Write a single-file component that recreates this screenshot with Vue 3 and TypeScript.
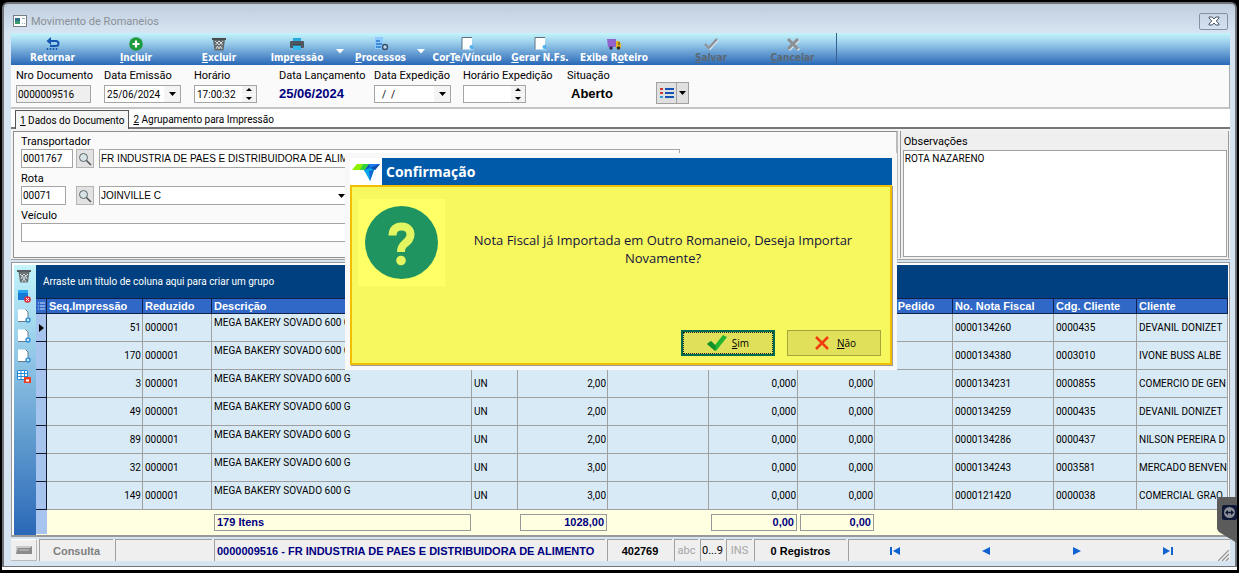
<script setup lang="ts">
import { ref } from 'vue'

interface ToolAction {
  id: string
  label: [string, string, string]
  icon: string
  disabled?: boolean
  menu?: boolean
}

interface Item {
  seq: string
  reduzido: string
  descricao: string
  unidade: string
  quantidade: string
  peso: string
  volume: string
  nota: string
  cdgCliente: string
  cliente: string
}

const actions: ToolAction[] = [
  { id: 'retornar', label: ['Retornar', '', ''], icon: 'back' },
  { id: 'incluir', label: ['', 'I', 'ncluir'], icon: 'add' },
  { id: 'excluir', label: ['', 'E', 'xcluir'], icon: 'trash' },
  { id: 'impressao', label: ['Imp', 'r', 'essão'], icon: 'printer', menu: true },
  { id: 'processos', label: ['', 'P', 'rocessos'], icon: 'process', menu: true },
  { id: 'corte', label: ['Cor', 'T', 'e/Vínculo'], icon: 'page' },
  { id: 'gerar', label: ['', 'G', 'erar N.Fs.'], icon: 'page' },
  { id: 'roteiro', label: ['Exibe R', 'o', 'teiro'], icon: 'truck' },
  { id: 'salvar', label: ['', 'S', 'alvar'], icon: 'check', disabled: true },
  { id: 'cancelar', label: ['', 'C', 'ancelar'], icon: 'cross', disabled: true },
]

const sideTools = [
  { name: 'Excluir item', icon: 'trash' },
  { name: 'Remover dados', icon: 'data' },
  { name: 'Nova folha', icon: 'page' },
  { name: 'Abrir folha', icon: 'page' },
  { name: 'Copiar folha', icon: 'page' },
  { name: 'Exportar grade', icon: 'grid' },
]

const mk = (seq: string, quantidade: string, nota: string, cdgCliente: string, cliente: string): Item => ({
  seq,
  reduzido: '000001',
  descricao: 'MEGA BAKERY SOVADO 600 G',
  unidade: 'UN',
  quantidade,
  peso: '0,000',
  volume: '0,000',
  nota,
  cdgCliente,
  cliente,
})

const items: Item[] = [
  mk('51', '2,00', '0000134260', '0000435', 'DEVANIL DONIZET'),
  mk('170', '2,00', '0000134380', '0003010', 'IVONE BUSS ALBE'),
  mk('3', '2,00', '0000134231', '0000855', 'COMERCIO DE GEN'),
  mk('49', '2,00', '0000134259', '0000435', 'DEVANIL DONIZET'),
  mk('89', '2,00', '0000134286', '0000437', 'NILSON PEREIRA D'),
  mk('32', '3,00', '0000134243', '0003581', 'MERCADO BENVEN'),
  mk('149', '3,00', '0000121420', '0000038', 'COMERCIAL GRAO'),
]

const documento = ref('0000009516')
const emissao = ref('25/06/2024')
const horario = ref('17:00:32')
const expedicao = ref('  /  /')
const horarioExp = ref('')
const codTransportador = ref('0001767')
const codRota = ref('00071')
const veiculo = ref('')
const observacoes = ref('ROTA NAZARENO')
const dialogOpen = ref(true)
</script>

<template>
  <div class="desktop">
    <main class="window">
      <header class="titlebar">
        <svg class="app-icon" viewBox="0 0 14 12" aria-hidden="true">
          <rect x=".5" y=".5" width="13" height="11" fill="#fff" stroke="#777e86" />
          <rect x="2" y="3" width="5" height="6" fill="#2b6f8c" />
          <rect x="2" y="6" width="5" height="3" fill="#3a9a6c" />
          <path d="M9 3.500h3M9 8.500h1M11 8.500h1" stroke="#9aa" />
        </svg>
        <h1>Movimento de Romaneios</h1>
        <button class="close" type="button" aria-label="Fechar">
          <svg viewBox="0 0 12 10"><path d="M1 1h3.200L6 3 7.800 1H11v1L8.300 5 11 8v1H7.800L6 7 4.200 9H1V8l2.700-3L1 2z" fill="#fff" stroke="#4a5363" /></svg>
        </button>
      </header>

      <nav class="toolbar" aria-label="Ações">
        <template v-for="a in actions" :key="a.id">
          <button type="button" class="tool" :class="a.id" :disabled="a.disabled">
            <svg class="tool-icon" viewBox="0 0 16 14" aria-hidden="true">
              <g v-if="a.icon === 'back'" fill="none" stroke="#1557b0">
                <path d="M4 4h7a2.500 2.500 0 0 1 0 5H5" stroke-width="2" />
                <path d="M6 0 1.500 4 6 8z" fill="#1557b0" stroke="none" />
                <path d="M2.500 11v2M5.500 11v2M8.500 11v2M11.500 11v2" stroke-width="1.500" />
              </g>
              <g v-else-if="a.icon === 'add'">
                <circle cx="8" cy="7" r="6.800" fill="#1c9a3c" />
                <path d="M8 3.500v7M4.500 7h7" stroke="#fff" stroke-width="2.200" />
              </g>
              <g v-else-if="a.icon === 'trash'">
                <path d="M2 2h12l-1.500 11.500h-9z" fill="#64686b" />
                <path d="M4 4l2 2 2-2 2 2 2-2M4.500 8l2-2 1.500 2 2-2 1.500 2M5 12l1.500-3L8 12l1.500-3 1.500 3" fill="none" stroke="#e3eef2" stroke-width=".9" />
                <path d="M1 2h14" stroke="#494d50" stroke-width="2" />
              </g>
              <g v-else-if="a.icon === 'printer'">
                <rect x="4" y="1" width="8" height="4" fill="#27a9dd" />
                <rect x="1" y="4" width="14" height="7" rx="1" fill="#50565d" />
                <rect x="4" y="8" width="8" height="5" fill="#35b8e8" />
                <path d="M4 8h8" stroke="#2f3439" />
              </g>
              <g v-else-if="a.icon === 'process'">
                <path d="M2 0h8v12H2z" fill="#8ccaff" />
                <path d="M3 4h4M3 7h6M3 10h5" stroke="#2878d0" stroke-width="1.500" />
                <circle cx="12" cy="10" r="2.500" fill="#b8d6ee" stroke="#385170" stroke-width="1.500" />
              </g>
              <g v-else-if="a.icon === 'page'">
                <path d="M3 .5h10v12H3z" fill="#fff" />
                <path d="M13 .5H3v12" fill="none" stroke="#5f7180" />
                <circle cx="12.500" cy="10" r="2" fill="#4fb2ee" />
                <path d="M9 13h6" stroke="#8bd2f8" />
              </g>
              <g v-else-if="a.icon === 'truck'">
                <path d="M1 2h9v8H2z" fill="#9063cf" />
                <path d="M10 4h3l2 3v4h-5z" fill="#e6b51f" />
                <circle cx="5" cy="11" r="1.800" fill="#382b58" /><circle cx="12.500" cy="11" r="1.800" fill="#34332e" />
                <path d="M13 5v3" stroke="#38321a" />
              </g>
              <g v-else-if="a.icon === 'check'" fill="none">
                <path d="m3 7.800 4 4 8-9" stroke="#dce7ef" stroke-width="2" />
                <path d="m2 7 4 4 8-9" stroke="#8b9094" stroke-width="2.200" />
              </g>
              <g v-else fill="none">
                <path d="m4 3 10 10M14 3 4 13" stroke="#dce7ef" stroke-width="2.500" />
                <path d="m3 2 10 10M13 2 3 12" stroke="#8b9094" stroke-width="3" />
              </g>
            </svg>
            <span>{{ a.label[0] }}<u>{{ a.label[1] }}</u>{{ a.label[2] }}</span>
          </button>
          <button v-if="a.menu" class="drop" type="button" :aria-label="'Opções de ' + a.label.join('')">
            <svg viewBox="0 0 8 5"><path d="M0 0h8L4 4.500z" fill="#fff" /></svg>
          </button>
        </template>
        <span class="tool-end"></span>
      </nav>

      <section class="filters">
        <div class="field">
          <label for="doc">Nro Documento</label>
          <input id="doc" v-model="documento" class="box w-doc" readonly />
        </div>
        <div class="field">
          <label for="emi">Data Emissão</label>
          <div class="box combo">
            <input id="emi" v-model="emissao" />
            <button type="button" aria-label="Abrir calendário de emissão"><svg viewBox="0 0 7 4"><path d="M0 0h7L3.500 4z" /></svg></button>
          </div>
        </div>
        <div class="field">
          <label for="hor">Horário</label>
          <div class="box spin">
            <input id="hor" v-model="horario" />
            <div class="arrows">
              <button type="button" aria-label="Aumentar horário"><svg viewBox="0 0 6 3"><path d="M0 3h6L3 0z" /></svg></button>
              <button type="button" aria-label="Diminuir horário"><svg viewBox="0 0 6 3"><path d="M0 0h6L3 3z" /></svg></button>
            </div>
          </div>
        </div>
        <div class="field">
          <span class="caption">Data Lançamento</span>
          <strong class="launch">25/06/2024</strong>
        </div>
        <div class="field">
          <label for="exp">Data Expedição</label>
          <div class="box combo">
            <input id="exp" v-model="expedicao" />
            <button type="button" aria-label="Abrir calendário de expedição"><svg viewBox="0 0 7 4"><path d="M0 0h7L3.500 4z" /></svg></button>
          </div>
        </div>
        <div class="field">
          <label for="hexp">Horário Expedição</label>
          <div class="box spin">
            <input id="hexp" v-model="horarioExp" />
            <div class="arrows">
              <button type="button" aria-label="Aumentar horário de expedição"><svg viewBox="0 0 6 3"><path d="M0 3h6L3 0z" /></svg></button>
              <button type="button" aria-label="Diminuir horário de expedição"><svg viewBox="0 0 6 3"><path d="M0 0h6L3 3z" /></svg></button>
            </div>
          </div>
        </div>
        <div class="field">
          <span class="caption">Situação</span>
          <strong class="status">Aberto</strong>
        </div>
        <div class="list-button">
          <button type="button" class="list-main" aria-label="Lista">
            <svg viewBox="0 0 14 10">
              <path d="M0 1h3M0 5h3" stroke="#c83a2e" stroke-width="2" /><path d="M0 9h3" stroke="#2f9fd8" stroke-width="2" />
              <path d="M5 1h9M5 5h9M5 9h9" stroke="#1553b5" stroke-width="2" />
            </svg>
          </button>
          <button type="button" class="list-drop" aria-label="Opções da lista"><svg viewBox="0 0 7 4"><path d="M0 0h7L3.500 4z" /></svg></button>
        </div>
      </section>

      <div class="tabs" role="tablist">
        <button type="button" role="tab" class="tab active" aria-selected="true"><u>1</u> Dados do Documento</button>
        <button type="button" role="tab" class="tab" aria-selected="false"><u>2</u> Agrupamento para Impressão</button>
      </div>

      <section class="details">
        <div class="carrier">
          <label for="transp">Transportador</label>
          <div class="row">
            <input id="transp" v-model="codTransportador" class="box w-code" />
            <span></span>
            <button type="button" class="search" aria-label="Pesquisar transportador">
              <svg viewBox="0 0 14 14"><circle cx="5.500" cy="5.500" r="4" fill="#d7e4e6" stroke="#5b6568" /><path d="m8.500 8.500 4.500 4.500" stroke="#4b5052" stroke-width="1.500" /></svg>
            </button>
            <div class="select-wrap">
              <select class="box" aria-label="Nome do transportador"><option>FR INDUSTRIA DE PAES E DISTRIBUIDORA DE ALIMENTOS</option></select>
              <svg viewBox="0 0 7 4"><path d="M0 0h7L3.500 4z" /></svg>
            </div>
          </div>
          <label for="rota">Rota</label>
          <div class="row">
            <input id="rota" v-model="codRota" class="box w-route" />
            <span></span>
            <button type="button" class="search" aria-label="Pesquisar rota">
              <svg viewBox="0 0 14 14"><circle cx="5.500" cy="5.500" r="4" fill="#d7e4e6" stroke="#5b6568" /><path d="m8.500 8.500 4.500 4.500" stroke="#4b5052" stroke-width="1.500" /></svg>
            </button>
            <div class="select-wrap route">
              <select class="box" aria-label="Nome da rota"><option>JOINVILLE C</option></select>
              <svg viewBox="0 0 7 4"><path d="M0 0h7L3.500 4z" /></svg>
            </div>
          </div>
          <label for="veic">Veículo</label>
          <input id="veic" v-model="veiculo" class="box w-vehicle" />
        </div>
        <div class="notes">
          <label for="obs">Observações</label>
          <textarea id="obs" v-model="observacoes"></textarea>
        </div>
      </section>

      <section class="grid-area">
        <div class="side">
          <button v-for="s in sideTools" :key="s.name" type="button" :aria-label="s.name">
            <svg viewBox="0 0 14 14">
              <g v-if="s.icon === 'trash'">
                <path d="M1.500 3h11l-1.500 10.500H3z" fill="#6d7375" />
                <path d="m3 5 2 2 2-2 2 2 2-2M4 10l1.500-3L7 10l1.500-3L10 10M5 13l2-3 2 3" fill="none" stroke="#dfeaee" stroke-width=".9" />
                <path d="M0 2h14" stroke="#54595b" stroke-width="2" />
              </g>
              <g v-else-if="s.icon === 'data'">
                <path d="M1 2h10v9H1z" fill="#167bd8" /><path d="M1 1h10v3H1z" fill="#2ba5f0" />
                <circle cx="10.500" cy="10.500" r="3.300" fill="#dc2f3d" /><path d="m9 9 3 3M12 9l-3 3" stroke="#fff" />
              </g>
              <g v-else-if="s.icon === 'page'">
                <path d="M1 .5h8l2 2v10H1z" fill="#fff" /><path d="M1 12.500h8M11 3v5" stroke="#6b7c88" /><path d="M8.500.5 11 3" stroke="#6b7c88" />
                <circle cx="11" cy="11" r="2" fill="#cfeaff" stroke="#2b8ad2" stroke-width="1.300" />
              </g>
              <g v-else>
                <path d="M0 1h11v10H0z" fill="#fff" /><path d="M.5 1.500h10v9H.5zM4 1v10M7.500 1v10M0 4.500h11M0 7.500h11" fill="none" stroke="#258bd8" />
                <path d="M7 8h7v6H7z" fill="#ea4025" /><path d="M9 11.500h3" stroke="#fff" stroke-width="2" />
              </g>
            </svg>
          </button>
        </div>
        <div class="grid">
          <div class="group-hint">Arraste um título de coluna aqui para criar um grupo</div>
          <table>
            <colgroup>
              <col class="c-ind" /><col class="c-seq" /><col class="c-red" /><col class="c-desc" /><col class="c-un" /><col class="c-qty" />
              <col class="c-x" /><col class="c-peso" /><col class="c-vol" /><col class="c-ped" /><col class="c-nf" /><col class="c-cdg" /><col />
            </colgroup>
            <thead>
              <tr>
                <th class="ind">
                  <svg viewBox="0 0 7 9"><path d="M0 1h1M0 4h1M0 7h1M2 1h5M2 4h5M2 7h5" stroke="#cfe0ff" /></svg>
                </th>
                <th>Seq.Impressão</th><th>Reduzido</th><th>Descrição</th><th></th><th></th><th></th><th></th><th></th>
                <th>No. Pedido</th><th>No. Nota Fiscal</th><th>Cdg. Cliente</th><th>Cliente</th>
              </tr>
            </thead>
            <tbody>
              <tr v-for="(it, i) in items" :key="it.seq">
                <td class="ind"><svg v-if="i === 0" viewBox="0 0 5 8"><path d="M0 0v8l5-4z" /></svg></td>
                <td class="num">{{ it.seq }}</td>
                <td>{{ it.reduzido }}</td>
                <td class="desc">{{ it.descricao }}</td>
                <td>{{ it.unidade }}</td>
                <td class="num">{{ it.quantidade }}</td>
                <td></td>
                <td class="num">{{ it.peso }}</td>
                <td class="num">{{ it.volume }}</td>
                <td></td>
                <td>{{ it.nota }}</td>
                <td>{{ it.cdgCliente }}</td>
                <td class="client">{{ it.cliente }}</td>
              </tr>
            </tbody>
            <tfoot>
              <tr>
                <td class="ind"></td><td></td><td></td>
                <td><div class="total">179 Itens</div></td>
                <td></td>
                <td><div class="total num">1028,00</div></td>
                <td></td>
                <td><div class="total num">0,00</div></td>
                <td><div class="total num">0,00</div></td>
                <td></td><td></td><td></td><td></td>
              </tr>
            </tfoot>
          </table>
        </div>
      </section>

      <footer class="statusbar">
        <div class="cell raised">
          <svg viewBox="0 0 16 8"><path d="M0 0h16v8H0z" fill="#8b8b8b" /><path d="M0 0h16l-2 2H2L0 8z" fill="#c9c9c9" /><path d="M3 4h10" stroke="#aaa" stroke-width="2" /></svg>
        </div>
        <div class="cell gray">Consulta</div>
        <div class="cell"></div>
        <div class="cell doc">0000009516 - FR INDUSTRIA DE PAES E DISTRIBUIDORA DE ALIMENTO</div>
        <div class="cell strong">402769</div>
        <div class="cell off">abc</div>
        <div class="cell key">0...9</div>
        <div class="cell off">INS</div>
        <div class="cell strong">0 Registros</div>
        <div class="cell pager">
          <button type="button" aria-label="Primeiro"><svg viewBox="0 0 12 8"><path d="M1 0h2v8H1zM11 0v8L4 4z" /></svg></button>
          <button type="button" aria-label="Anterior"><svg viewBox="0 0 12 8"><path d="M10 0v8L2 4z" /></svg></button>
          <button type="button" aria-label="Próximo"><svg viewBox="0 0 12 8"><path d="M2 0v8l8-4z" /></svg></button>
          <button type="button" aria-label="Último"><svg viewBox="0 0 12 8"><path d="M1 0v8l7-4zM9 0h2v8H9z" /></svg></button>
          <svg class="grip" viewBox="0 0 11 11"><path d="M0 11 11 0M4 11l7-7M8 11l3-3" stroke="#8e8e8e" stroke-width="1.200" /></svg>
        </div>
      </footer>
    </main>

    <div v-if="dialogOpen" class="dialog" role="dialog" aria-labelledby="dlg-title">
      <div class="dialog-title">
        <svg class="logo" viewBox="0 0 32 27" aria-hidden="true">
          <path d="M7 6h13l-3 6H2z" fill="#8ef000" /><path d="M13 6h6l-4 6h-5z" fill="#36d23c" />
          <path d="m19 6-5 7 6 3 3-5z" fill="#0b55c4" /><path d="M19 6h11l-5 6h-5z" fill="#1b7bea" /><path d="m25 12 5-6-10 4z" fill="#0e4cab" />
          <path d="m14 12 6 11 4-11-4-2z" fill="#00a6e8" /><path d="m19 13 1 10 4-11z" fill="#1566d2" />
        </svg>
        <h2 id="dlg-title">Confirmação</h2>
      </div>
      <div class="dialog-body">
        <div class="ask">
          <div class="ask-icon">
            <svg viewBox="0 0 87 87" aria-hidden="true">
              <circle cx="43.500" cy="43.500" r="36.500" fill="#1f9460" />
              <path d="M34.500 36.500c0-6 3.500-9 9-9s9 3.200 9 8c0 4.500-2.500 6.500-5.500 9-3.200 2.700-4 4.300-4 8.500" fill="none" stroke="#e3f560" stroke-width="8" />
              <circle cx="43" cy="61.500" r="4.800" fill="#e3f560" />
            </svg>
          </div>
          <p>Nota Fiscal já Importada em Outro Romaneio, Deseja Importar<br />Novamente?</p>
        </div>
        <div class="answers">
          <button type="button" class="answer default" @click="dialogOpen = false">
            <svg viewBox="0 0 20 16"><path d="m0 9 4-3 4 4 8-10 4 2-11 14z" fill="#22b52f" /><path d="m0 9 4-3 5 5-1 5z" fill="#12902a" /></svg>
            <span><u>S</u>im</span>
          </button>
          <button type="button" class="answer" @click="dialogOpen = false">
            <svg viewBox="0 0 20 16"><path d="m4 2 12 12M16 2 4 14" stroke="#f03c10" stroke-width="2.500" /></svg>
            <span><u>N</u>ão</span>
          </button>
        </div>
      </div>
    </div>

    <button type="button" class="remote" aria-label="Controle remoto">
      <svg viewBox="0 0 20 46">
        <path d="M2 0h18v46L2 35 0 32V2z" fill="#5b5b5b" />
        <rect x="5" y="8" width="15" height="15" rx="2" fill="#101838" />
        <circle cx="12.500" cy="15.500" r="5.500" fill="#8a8d94" />
        <path d="M9 15.500h7" stroke="#101838" stroke-width="1.500" /><path d="m8 15.500 3-2.500v5zM17 15.500 14 13v5z" fill="#101838" />
      </svg>
    </button>
  </div>
</template>

<style>
body {
  margin: 0;
  background: #000;
}
</style>

<style scoped>
* {
  box-sizing: border-box;
}

.desktop {
  position: relative;
  display: flex;
  min-height: 100vh;
  padding: 2px;
  background: #000;
  font-family: Roboto, "Liberation Sans", sans-serif;
  font-size: 11px;
  color: #000;
}

button,
input,
select,
textarea {
  margin: 0;
  padding: 0;
  border: 0;
  border-radius: 0;
  background: none;
  font: inherit;
  color: inherit;
}

svg {
  display: block;
}

.window {
  flex: 1;
  min-width: 0;
  display: flex;
  flex-direction: column;
  border: 2px solid #6f7478;
  border-bottom-width: 1px;
  border-radius: 6px 6px 0 0;
  margin-bottom: 4px;
  padding: 1px 5px 5px 7px;
  background: linear-gradient(#c0cddd, #d6e4f2 28px);
  box-shadow: 0 3px 0 #fff;
}

.titlebar {
  display: flex;
  align-items: center;
  height: 28px;
  padding: 4px 2px 0;
}

.app-icon {
  width: 14px;
  height: 12px;
}

.titlebar h1 {
  flex: 1;
  margin: 2px 0 0 4px;
  font-size: 11px;
  font-weight: 400;
  line-height: 16px;
  color: #8b9096;
}

.close {
  display: grid;
  place-items: center;
  width: 29px;
  height: 17px;
  border: 1px solid #8492a8;
  border-radius: 2px;
}

.close svg {
  width: 12px;
  height: 10px;
}

.toolbar {
  display: grid;
  grid-template-columns: 83px 84px 82px 74px 12px 69px 12px 80px 66px 82px 96px 83px 3px;
  height: 32px;
  background: linear-gradient(#c4f5fb, #9ccfec 30%, #6ba2d4 60%, #2a68b8);
}

.tool {
  display: flex;
  flex-direction: column;
  align-items: center;
  padding-top: 4px;
  font-family: "DejaVu Sans Condensed", "DejaVu Sans", sans-serif;
  font-size: 10px;
  font-weight: 700;
  line-height: 14px;
  color: #fff;
  white-space: nowrap;
}

.tool:disabled {
  color: #5b6773;
}

.salvar {
  padding-left: 16px;
}

.tool-icon {
  width: 16px;
  height: 14px;
}

.drop svg {
  width: 8px;
  height: 5px;
  margin: 5px auto 0;
}

.tool-end {
  border-right: 1px solid #35618f;
}

.filters {
  display: grid;
  grid-template-columns: 88px 90px 85px 95px 89px 104px 89px 33px;
  height: 44px;
  padding: 3px 4px 0 5px;
  border-right: 1px solid #aaa;
  border-bottom: 2px solid #c4c4c4;
  background: #fafafa;
}

.field {
  display: flex;
  flex-direction: column;
  align-items: flex-start;
}

.field label,
.field .caption {
  height: 17px;
  line-height: 15px;
  white-space: nowrap;
}

.box {
  height: 18px;
  border: 1px solid #a5a5a5;
  background: #fff;
  font-size: 10px;
  padding-left: 1px;
}

.w-doc {
  width: 75px;
  background: #efefef;
}

.combo,
.spin {
  display: flex;
  width: 77px;
}

.spin {
  width: 63px;
}

.box input {
  flex: 1;
  min-width: 0;
  white-space: pre;
  padding-left: 1px;
}

.combo button {
  display: grid;
  place-items: center;
  width: 16px;
  background: #f4f4f4;
}

.combo svg,
.list-drop svg,
.select-wrap svg {
  width: 7px;
  height: 4px;
}

.arrows {
  display: flex;
  flex-direction: column;
  gap: 1px;
}

.arrows button {
  display: grid;
  place-items: center;
  flex: 1;
  width: 14px;
  background: #f2f2f2;
}

.arrows svg {
  width: 6px;
  height: 3px;
}

.launch {
  font-family: "Liberation Sans", sans-serif;
  font-size: 13px;
  line-height: 18px;
  color: #000080;
}

.status {
  padding-left: 4px;
  font-family: "Liberation Sans", sans-serif;
  font-size: 13px;
  line-height: 18px;
}

.list-button {
  display: flex;
  height: 22px;
  margin-top: 14px;
  border: 1px solid #a0a0a0;
  background: #e0e0e0;
}

.list-main,
.list-drop {
  display: grid;
  place-items: center;
  width: 20px;
}

.list-drop {
  width: 12px;
  border-left: 1px solid #a0a0a0;
}

.list-main svg {
  width: 14px;
  height: 10px;
}

.tabs {
  display: flex;
  height: 20px;
  padding-left: 4px;
  border-bottom: 2px solid #777;
  background: #fff;
}

.tab {
  height: 20px;
  padding: 0 4px;
  font-size: 10px;
  line-height: 22px;
  white-space: nowrap;
}

.tab.active {
  margin-top: 1px;
  height: 19px;
  border: 1px solid #555;
  border-bottom: 0;
  background: #f5f5f5;
  line-height: 20px;
}

.details {
  display: flex;
  height: 131px;
  padding: 2px 1px 1px 2px;
  border-bottom: 1px solid #a0a0a0;
  background: #f3f3f3;
}

.carrier {
  flex: 885;
  display: flex;
  flex-direction: column;
  padding: 2px 0 0 7px;
  border: 1px solid #8e8e8e;
  border-right: 2px solid #bbb;
  background: #fafafa;
}

.carrier label {
  height: 15px;
  line-height: 15px;
}

.row {
  display: grid;
  grid-template-columns: 52px 3px 18px 1fr;
  width: 659px;
  height: 19px;
  margin-bottom: 3px;
}

.row .box,
.w-vehicle {
  height: 19px;
}

.w-code {
  width: 52px;
}

.w-route {
  width: 45px;
}

.w-vehicle {
  width: 659px;
}

.search {
  display: grid;
  place-items: center;
  border: 1px solid #b4b4b4;
  background: #e2e2e2;
}

.search svg {
  width: 14px;
  height: 14px;
}

.select-wrap {
  position: relative;
  margin-left: 5px;
}

.select-wrap.route {
  width: 249px;
}

.select-wrap select {
  width: 100%;
  appearance: none;
  font-family: "Liberation Sans", sans-serif;
}

.select-wrap svg {
  position: absolute;
  right: 3px;
  top: 8px;
  pointer-events: none;
}

.notes {
  flex: 328;
  display: flex;
  flex-direction: column;
  margin-left: 2px;
  padding: 0 1px 1px 2px;
  border-left: 1px solid #999;
  border-right: 1px solid #999;
  background: #efefef;
}

.notes label {
  height: 19px;
  padding-left: 1px;
  line-height: 21px;
}

.notes textarea {
  flex: 1;
  resize: none;
  padding: 1px;
  border: 1px solid #a0a0a0;
  background: #fff;
  font-size: 10px;
  line-height: 13px;
}

.grid-area {
  display: flex;
  flex: 1;
  margin-top: 2px;
  padding: 2px 1px 0 2px;
  border: 1px solid #999;
  border-bottom: 2px solid #999;
  background: #fff;
}

.side {
  display: flex;
  flex-direction: column;
  align-items: center;
  gap: 6px;
  width: 22px;
  padding: 4px 2px 0 0;
  background: linear-gradient(#c4f5fb, #8fc6e6 35%, #5f9ace 65%, #2a68b8);
}

.side svg {
  width: 14px;
  height: 14px;
}

.grid {
  flex: 1;
  min-width: 0;
  overflow: hidden;
  background: #ffffe1;
}

.group-hint {
  height: 33px;
  padding-left: 7px;
  background: #004080;
  color: #fff;
  font-size: 10px;
  line-height: 34px;
}

table {
  width: 100%;
  table-layout: fixed;
  border-collapse: separate;
  border-spacing: 0;
}

.c-ind { width: 11px; }
.c-seq { width: 96px; }
.c-red { width: 69px; }
.c-desc { width: 260px; }
.c-un { width: 46px; }
.c-qty { width: 90px; }
.c-x { width: 101px; }
.c-peso { width: 89px; }
.c-vol { width: 77px; }
.c-ped { width: 78px; }
.c-nf { width: 101px; }
.c-cdg { width: 83px; }

th {
  height: 16px;
  padding: 0 0 0 2px;
  border: 1px solid #10204a;
  border-left: 0;
  background: #2f68c6;
  color: #fff;
  font-family: "Liberation Sans", sans-serif;
  font-size: 11px;
  line-height: 14px;
  text-align: left;
  white-space: nowrap;
}

th.ind svg {
  width: 7px;
  height: 9px;
}

td {
  padding: 0 2px;
  white-space: nowrap;
  overflow: hidden;
}

tbody td {
  height: 28px;
  border-right: 1px solid #a0a0a0;
  border-bottom: 1px solid #a0a0a0;
  background: #d8eaf6;
  font-size: 10px;
  line-height: 13px;
}

tbody td.num {
  padding-right: 1px;
}

.num {
  text-align: right;
}

tbody td.desc {
  padding-top: 2px;
  vertical-align: top;
}

td.ind {
  padding: 0 0 0 3px;
  background: #a6c4ee;
}

tbody td.ind {
  border-color: #10182a;
}

td.ind svg {
  width: 5px;
  height: 8px;
}

tfoot td {
  height: 24px;
  padding: 0 1px 0 2px;
}

.total {
  height: 17px;
  padding: 0 2px;
  border: 1px solid #999;
  color: #000080;
  font-family: "Liberation Sans", sans-serif;
  font-size: 11px;
  font-weight: 700;
  line-height: 15px;
}

.statusbar {
  display: grid;
  grid-template-columns: 26px 74px 97px 391px 65px 24px 24px 26px 92px 1fr;
  gap: 2px;
  height: 22px;
  margin-top: 2px;
  background: #efefef;
}

.cell {
  display: grid;
  place-items: center;
  overflow: hidden;
  border-left: 1px solid #a0a0a0;
  border-top: 1px solid #a0a0a0;
  white-space: nowrap;
}

.raised {
  border: 1px solid #bbb;
  border-left: 0;
  border-top-color: #fff;
}

.raised svg {
  width: 16px;
  height: 8px;
}

.gray,
.strong,
.doc {
  font-family: "Liberation Sans", sans-serif;
  font-weight: 700;
}

.gray {
  color: #808080;
}

.doc {
  place-items: center start;
  padding-left: 2px;
  color: #000080;
}

.off {
  color: #a5a5a5;
}

.cell.pager {
  grid-template-columns: repeat(4, 1fr);
  position: relative;
  padding-right: 16px;
}

.pager button svg {
  width: 12px;
  height: 8px;
  fill: #0f62d0;
}

.grip {
  position: absolute;
  right: 1px;
  bottom: 0;
  width: 11px;
  height: 11px;
}

.dialog {
  position: absolute;
  left: 345px;
  top: 153px;
  width: 552px;
  padding: 5px;
  background: #f8f8f8;
}

.dialog-title {
  display: flex;
  height: 27px;
  background: #005aaa;
}

.logo {
  width: 32px;
  height: 27px;
  background: #fff;
}

.dialog-title h2 {
  margin: 0 0 0 4px;
  color: #fff;
  font-family: "Open Sans", sans-serif;
  font-size: 14px;
  font-weight: 700;
  line-height: 28px;
}

.dialog-body {
  padding: 12px 9px 7px 6px;
  border: 2px solid #f3be00;
  background: #f7f75e;
  box-shadow: 1px 1px 0 #999;
}

.ask {
  display: flex;
}

.ask-icon {
  width: 87px;
  background: #ffff66;
}

.ask p {
  flex: 1;
  margin: 32px 0 0;
  color: #14143c;
  font-family: "Open Sans", sans-serif;
  font-size: 13px;
  font-weight: 500;
  line-height: 18px;
  text-align: center;
  white-space: nowrap;
}

.answers {
  display: flex;
  justify-content: flex-end;
  gap: 12px;
  margin-top: 44px;
}

.answer {
  display: flex;
  align-items: center;
  justify-content: center;
  gap: 5px;
  width: 94px;
  height: 26px;
  border: 1px solid #a5a53c;
  background: #e0e05a;
  font-family: "Open Sans", sans-serif;
  font-size: 10px;
}

.answer.default {
  border: 2px solid #006a50;
  outline: 1px dotted #222;
  outline-offset: -3px;
}

.answer svg {
  width: 20px;
  height: 16px;
}

.remote {
  position: absolute;
  right: 2px;
  bottom: 30px;
  width: 20px;
  height: 46px;
}
</style>
